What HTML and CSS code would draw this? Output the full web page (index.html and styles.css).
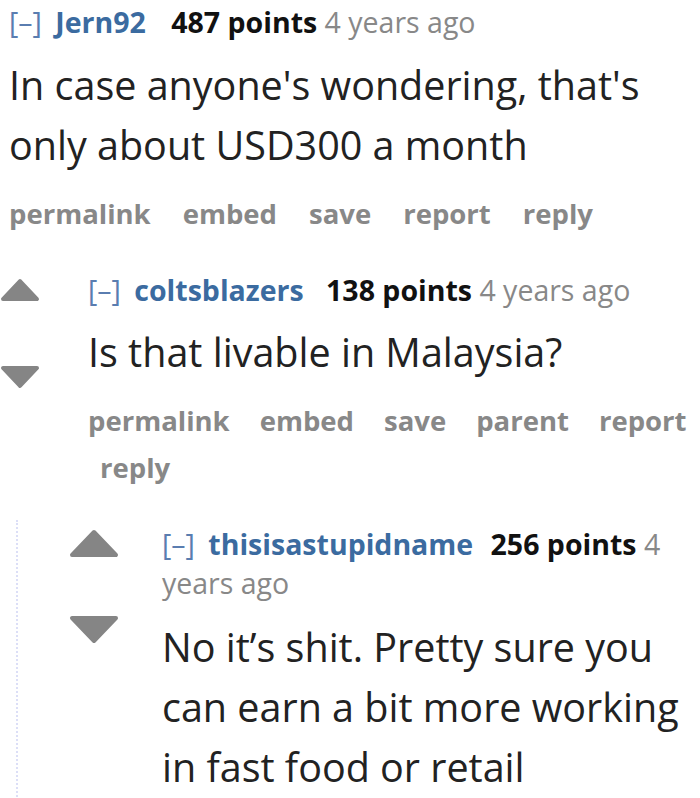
FILE: index.html
```html
<!DOCTYPE html>
<html lang="en">

<head>
	<meta charset="UTF-8">
	<title>comments</title>
	<link rel="stylesheet" href="styles.css">
</head>

<body>
	<!-- top level comment -->
	<div class="comment top">
		<div class="entry">
			<p class="tagline">
				<a href="javascript:;" class="expand">[–]</a>
				<a href="javascript:;" class="author">Jern92</a>
				<span class="score">487 points</span>
				<time>4 years ago</time>
			</p>
			<div class="md">In case anyone's wondering, that's only about USD300 a month</div>
			<ul class="buttons">
				<li><a href="javascript:;">permalink</a></li>
				<li><a href="javascript:;">embed</a></li>
				<li><a href="javascript:;">save</a></li>
				<li><a href="javascript:;">report</a></li>
				<li><a href="javascript:;">reply</a></li>
			</ul>
		</div>

		<!-- replies -->
		<div class="child">
			<div class="comment second">
				<div class="row">
					<div class="midcol">
						<svg class="arrow" viewBox="0 0 40 24"><polygon points="20,3 37,21 3,21" /></svg>
						<svg class="arrow" viewBox="0 0 40 24"><polygon points="3,3 37,3 20,21" /></svg>
					</div>
					<div class="entry">
						<p class="tagline">
							<a href="javascript:;" class="expand">[–]</a>
							<a href="javascript:;" class="author">coltsblazers</a>
							<span class="score">138 points</span>
							<time>4 years ago</time>
						</p>
						<div class="md">Is that livable in Malaysia?</div>
						<ul class="buttons">
							<li><a href="javascript:;">permalink</a></li>
							<li><a href="javascript:;">embed</a></li>
							<li><a href="javascript:;">save</a></li>
							<li><a href="javascript:;">parent</a></li>
							<li><a href="javascript:;">report</a></li>
							<li><a href="javascript:;">reply</a></li>
						</ul>
					</div>
				</div>

				<div class="child dotted">
					<div class="comment third">
						<div class="row">
							<div class="midcol">
								<svg class="arrow" viewBox="0 0 50 29"><polygon points="25,3 47,26 3,26" /></svg>
								<svg class="arrow" viewBox="0 0 50 29"><polygon points="3,3 47,3 25,26" /></svg>
							</div>
							<div class="entry">
								<p class="tagline">
									<a href="javascript:;" class="expand">[–]</a>
									<a href="javascript:;" class="author">thisisastupidname</a>
									<span class="score">256 points</span>
									<time>4</time><br>
									<time>years ago</time>
								</p>
								<div class="md">No it’s shit. Pretty sure you can earn a bit more working in fast food or retail</div>
							</div>
						</div>
					</div>
				</div>
			</div>
		</div>
	</div>
</body>

</html>
```

FILE: styles.css
```css
* {
	margin: 0;
	padding: 0;
}
html, body {
	height: 100%;
	overflow: hidden;
}
body {
	background: #fff;
	font-family: "Open Sans", "Noto Sans", sans-serif;
	color: #222;
}
a {
	text-decoration: none;
}
li {
	list-style: none;
}

/* tagline: [–] author  points  time */
.tagline {
	font-size: 28.5px;
	line-height: 36px;
	color: #888;
}
.tagline .expand {
	color: #5a7db0;
	margin-right: 6px;
}
.tagline .author {
	color: #3b6ba0;
	font-weight: bold;
	margin-right: 15px;
}
.tagline .score {
	color: #111;
	font-weight: bold;
}
.tagline time {
	color: #888;
}

.md {
	font-size: 39.5px;
	line-height: 60px;
	color: #222;
}

.buttons {
	display: flex;
	flex-wrap: wrap;
	margin-right: -20px;
	font-size: 27.5px;
	font-weight: bold;
}
.buttons li {
	padding-right: 18px;
	padding-left: 12px;
}
.buttons li:first-child {
	padding-left: 0;
}
.buttons a {
	color: #888;
}

/* first comment */
.top {
	padding-top: 4px;
}
.top > .entry {
	padding-left: 9px;
}
.top > .entry .tagline .author {
	margin-right: 18px;
}
.top > .entry .md {
	margin-top: 15px;
}
.top > .entry .buttons {
	margin-top: 21px;
	line-height: 36px;
}
.top > .entry .buttons li {
	padding-right: 19px;
	padding-left: 13px;
}
.top > .entry .buttons li:first-child {
	padding-left: 0;
}

/* second comment */
.second {
	margin-top: 40px;
}
.row {
	display: flex;
}
.midcol {
	display: flex;
	flex-direction: column;
	flex-shrink: 0;
}
.arrow {
	display: block;
	fill: #858585;
	stroke: #858585;
	stroke-width: 4;
	stroke-linejoin: round;
}
.second .midcol {
	width: 40px;
	margin-right: 48px;
	padding-top: 5px;
	gap: 61px;
}
.second .midcol .arrow {
	width: 40px;
	height: 26px;
}
.second > .row .md {
	margin-top: 14px;
}
.second > .row .buttons {
	margin-top: 15px;
	line-height: 47px;
}

/* nested reply with the dotted guide line */
.dotted {
	margin-top: 29px;
	margin-left: 16px;
	border-left: 2px dotted #dcdff7;
	height: 400px;
}
.third {
	padding-top: 5px;
}
.third .midcol {
	width: 50px;
	margin-left: 51px;
	margin-right: 43px;
	padding-top: 3px;
	gap: 55px;
}
.third .midcol .arrow {
	width: 50px;
	height: 31px;
}
.third .tagline {
	line-height: 39px;
}
.third .tagline .author {
	margin-right: 10px;
}
.third .md {
	margin-top: 14px;
}
```
